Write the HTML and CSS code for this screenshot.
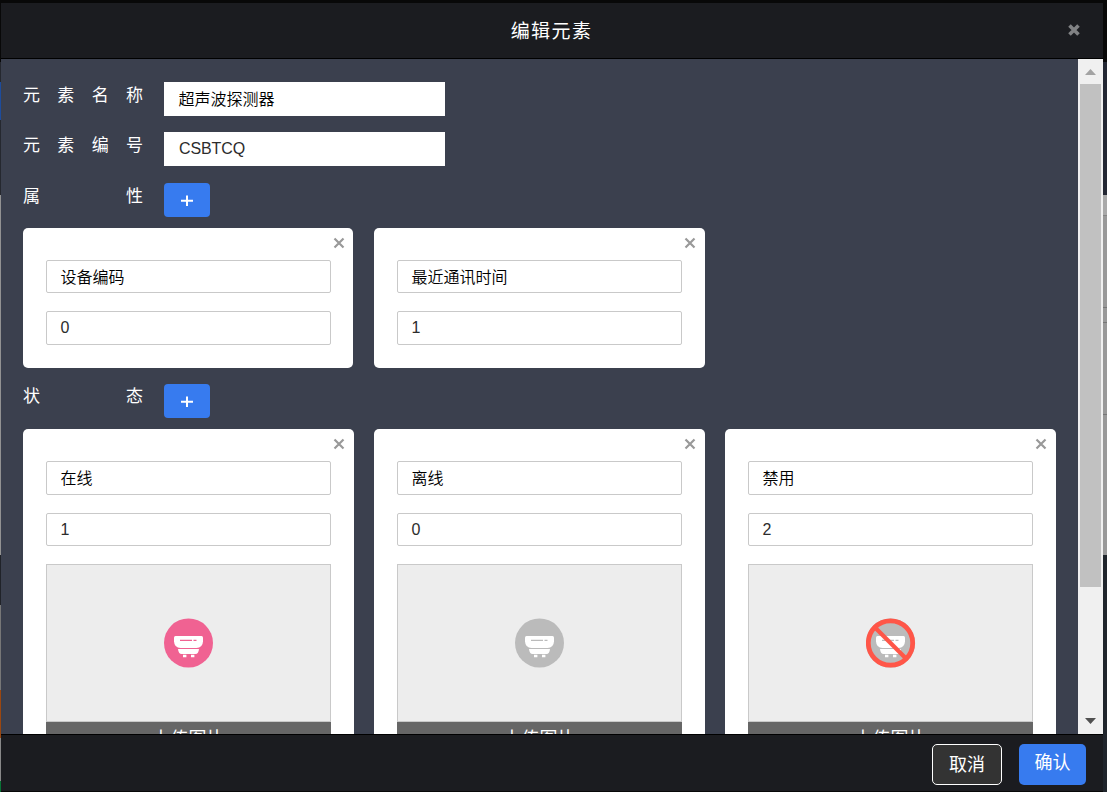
FILE: index.html
```html
<!DOCTYPE html>
<html lang="zh-CN">
<head>
<meta charset="utf-8">
<title>编辑元素</title>
<link rel="stylesheet" href="styles.css">
</head>
<body>
<svg class="defs" width="0" height="0">
  <symbol id="cross" viewBox="0 0 12 12"><path d="M1.5 1.5L10.5 10.5M10.5 1.5L1.5 10.5" stroke="currentColor" fill="none"/></symbol>
  <symbol id="sensor" viewBox="0.5 0 50 50">
    <circle cx="25" cy="25" r="24.5" fill="currentColor"/>
    <path d="M10.500 19.5Q10.500 18 12 18H38Q39.500 18 39.500 19.500V23.500Q39 30 33 30H17Q11 30 10.500 23.500Z" fill="#fff"/>
    <path d="M14.500 30.900H35.500Q35 36 32 36H18Q15 36 14.500 30.900Z" fill="#fff"/>
    <path d="M19.500 36.800h3.400v2.500h-3.400zM27.500 36.800h3.400v2.500h-3.400z" fill="#fff"/>
    <path d="M16.500 22.300h12M30 22.300h3" stroke="currentColor" stroke-width="1.300"/>
  </symbol>
</svg>
<div class="page">
  <div class="edge-left"></div>
  <main class="modal">
    <header class="modal-header">
      <h1 class="title">编辑元素</h1>
      <svg class="modal-close"><use href="#cross"/></svg>
    </header>
    <div class="modal-body">
      <div class="content">
        <div class="row">
          <div class="label"><span>元</span><span>素</span><span>名</span><span>称</span></div>
          <div class="field">超声波探测器</div>
        </div>
        <div class="row second">
          <div class="label"><span>元</span><span>素</span><span>编</span><span>号</span></div>
          <div class="field latin">CSBTCQ</div>
        </div>
        <div class="row section">
          <div class="label"><span>属</span><span>性</span></div>
          <div class="add"><svg width="12" height="12"><path d="M6 .5v10.500M0 5.800h12" stroke="#fff" stroke-width="2"/></svg></div>
        </div>
        <div class="cards attributes">
          <div class="card"><svg class="card-close"><use href="#cross"/></svg>
            <div class="box">设备编码</div><div class="box latin">0</div></div>
          <div class="card"><svg class="card-close"><use href="#cross"/></svg>
            <div class="box">最近通讯时间</div><div class="box latin">1</div></div>
        </div>
        <div class="row states-row">
          <div class="label"><span>状</span><span>态</span></div>
          <div class="add"><svg width="12" height="12"><path d="M6 .5v10.500M0 5.800h12" stroke="#fff" stroke-width="2"/></svg></div>
        </div>
        <div class="cards states">
          <div class="card"><svg class="card-close"><use href="#cross"/></svg>
            <div class="box">在线</div><div class="box latin">1</div>
            <div class="picture online"><svg width="50" height="50"><use href="#sensor"/></svg></div>
            <div class="upload">上传图片</div></div>
          <div class="card"><svg class="card-close"><use href="#cross"/></svg>
            <div class="box">离线</div><div class="box latin">0</div>
            <div class="picture offline"><svg width="50" height="50"><use href="#sensor"/></svg></div>
            <div class="upload">上传图片</div></div>
          <div class="card"><svg class="card-close"><use href="#cross"/></svg>
            <div class="box">禁用</div><div class="box latin">2</div>
            <div class="picture offline"><svg width="50" height="50"><use href="#sensor"/><circle cx="24.500" cy="25" r="22.200" fill="none" stroke="#ff5648" stroke-width="4.800"/><path d="M9 9.500L40 40.500" stroke="#ff5648" stroke-width="4.200"/></svg></div>
            <div class="upload">上传图片</div></div>
        </div>
      </div>
      <div class="scrollbar">
        <svg class="arrow" width="11" height="6"><path d="M0 6L5.500 0L11 6Z" fill="#a3a3a3"/></svg>
        <div class="thumb"></div>
        <svg class="arrow down" width="11" height="6"><path d="M0 0H11L5.500 6Z" fill="#505050"/></svg>
      </div>
    </div>
    <footer class="modal-footer">
      <div class="button cancel">取消</div>
      <div class="button confirm">确认</div>
    </footer>
  </main>
  <div class="edge-right"></div>
</div>
</body>
</html>
```
FILE: styles.css
```css
* { box-sizing: border-box; }
body { margin: 0; background: #080808; overflow: hidden; font-family: "Liberation Sans", "Noto Sans CJK SC", sans-serif; }
.defs { position: absolute; }
.page { height: 792px; display: grid; grid-template-columns: 1px 1102px 4px; }
.edge-left { background: linear-gradient(#080808 62px, #25282f 62px 82px, #1d4c9c 82px 120px, #25282f 120px 195px, #929292 195px 555px, #202329 555px 605px, #777 605px 690px, #9b4710 690px 738px, #888 738px 781px, #087235 781px); }
.edge-right { background: linear-gradient(#080808 62px, #232733 62px 195px, #a9a9a9 195px 215px, #858585 215px 216px, #999 216px 307px, #777 307px 308px, #999 308px 322px, #777 322px 323px, #999 323px 414px, #777 414px 415px, #999 415px 555px, #20252c 555px); }
.modal { margin-top: 3px; height: 788px; display: flex; flex-direction: column; background: #3b404e; }
.modal-header { height: 56px; flex: none; display: grid; grid-template-columns: 1fr auto 1fr; align-items: center; background: #1b1c20; border-bottom: 1px solid #000; }
.title { grid-column: 2; margin: 0; padding: 2px 1px 0 0; color: #fff; font-size: 19px; font-weight: 400; letter-spacing: 1.4px; line-height: 28px; }
.modal-close { justify-self: end; width: 12px; height: 12px; margin: 0 23px 2px 0; color: #818284; stroke-width: 3.6; }
.modal-body { height: 675px; flex: none; display: flex; overflow: hidden; }
.content { flex: 1; padding: 23px 22px 0; overflow: hidden; }
.row { height: 34px; display: flex; gap: 21px; }
.row.second { margin-top: 16px; }
.row.section { margin-top: 17px; }
.row.states-row { margin-top: 16px; }
.label { width: 120px; display: flex; justify-content: space-between; color: #fff; font-size: 17px; line-height: 27px; }
.states-row .label { line-height: 26px; }
.field { width: 281px; height: 34px; padding-left: 14.5px; background: #fff; color: #000; font-family: "Noto Sans CJK SC DemiLight", "Noto Sans CJK SC", sans-serif; font-size: 16px; line-height: 33px; font-weight: 350; }
.latin.latin { font-family: "Liberation Sans", sans-serif; font-weight: 400; color: #2c2c2c; }
.field.latin { padding-left: 15px; line-height: 34px; letter-spacing: -.1px; }
.add { width: 46px; height: 34px; display: flex; align-items: center; justify-content: center; border-radius: 4px; background: #377bef; }
.add svg { margin-top: 2px; }
.cards { display: grid; grid-template-columns: repeat(3, 331px); gap: 20px; margin-top: 11px; }
.card { position: relative; padding: 32px 22px 23px 23px; border-radius: 5px; background: #fff; }
.attributes .card { height: 140px; }
.attributes .card:first-child { width: 330px; }
.attributes .card:first-child .card-close { right: 8px; }
.states .card { height: 360px; }
.card-close { position: absolute; top: 9px; right: 9px; width: 12px; height: 12px; color: #999; stroke-width: 2.2; }
.box { width: 285px; height: 34px; padding-left: 13.5px; border: 1px solid #c9c9c9; border-radius: 2px; color: #000; font-family: "Noto Sans CJK SC DemiLight", "Noto Sans CJK SC", sans-serif; font-size: 16px; line-height: 31px; font-weight: 350; }
.attributes .box:nth-of-type(1) { height: 33px; }
.attributes .box:nth-of-type(2) { margin-top: 18px; line-height: 31px; }
.states .box:nth-of-type(2) { height: 33px; margin-top: 18px; line-height: 31px; }
.picture { width: 285px; height: 158px; margin-top: 18px; display: flex; align-items: center; justify-content: center; border: 1px solid #c9c9c9; background: #ededed; }
.online { color: #f06292; }
.offline { color: #bbb; }
.upload { width: 285px; height: 34px; background: #666; color: #fff; text-align: center; font-size: 18px; line-height: 34px; }
.scrollbar { width: 25px; flex: none; display: flex; flex-direction: column; align-items: center; background: #f0f0f0; }
.arrow { flex: none; margin-top: 10px; }
.arrow.down { margin: auto 0 10px; }
.thumb { width: 21px; height: 503px; margin-top: 9px; background: #c1c1c1; }
.modal-footer { flex: 1; display: flex; justify-content: flex-end; gap: 17px; padding: 9px 17px 0 0; background: #1b1c20; border-top: 1px solid #000; }
.button { height: 41px; border-radius: 5px; color: #fff; text-align: center; font-size: 18px; }
.cancel { width: 70px; border: 1px solid #fff; background: #333; line-height: 41px; }
.confirm { width: 67px; background: #377bef; line-height: 39px; }
```
